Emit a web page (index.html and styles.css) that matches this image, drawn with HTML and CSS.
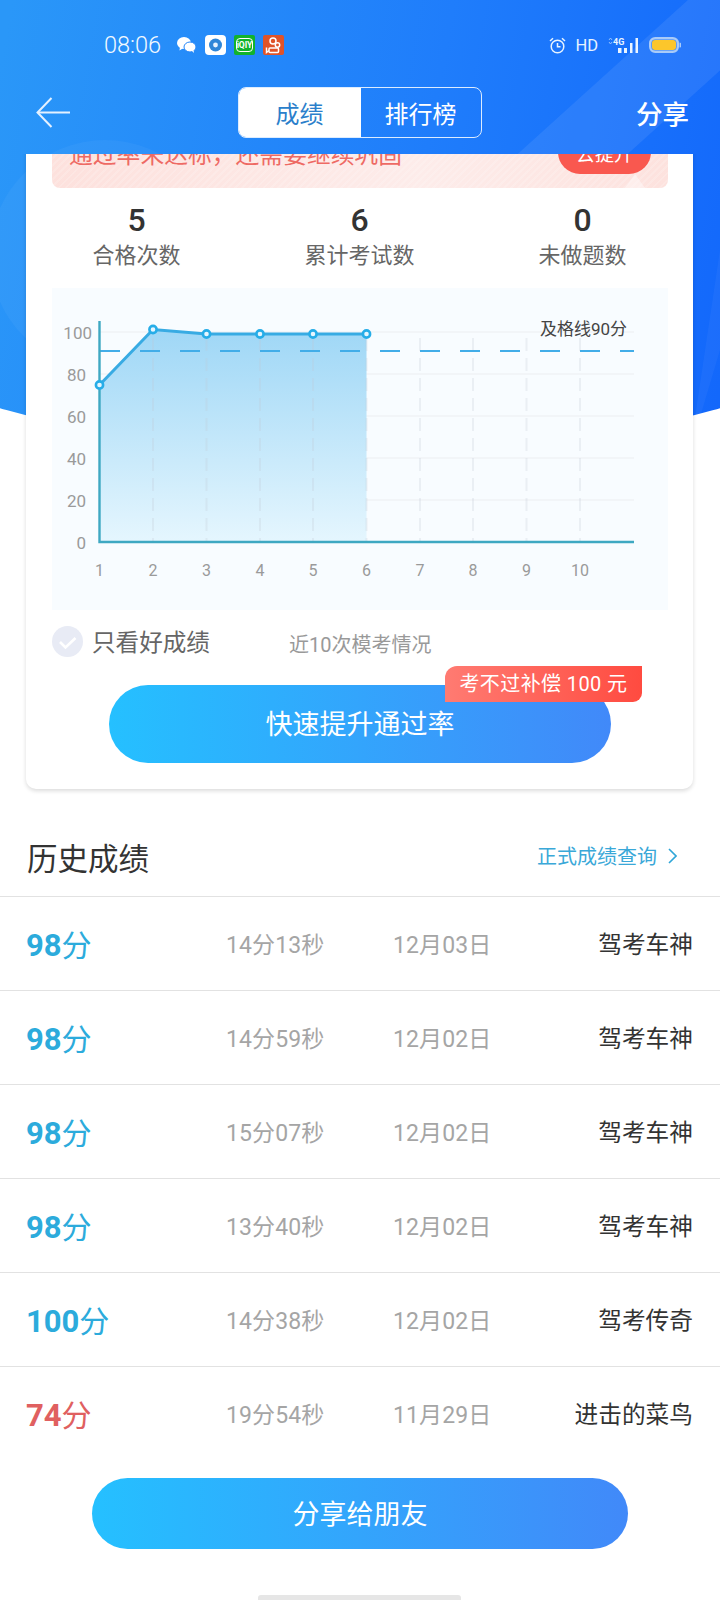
FILE: index.html
```html
<!DOCTYPE html>
<html lang="zh-CN">
    <head>
        <meta charset="UTF-8" />
        <meta name="viewport" content="width=device-width, initial-scale=1.0" />
        <title>成绩</title>
        <link rel="stylesheet" href="styles.css">
    </head>
    <body>
        <div class="app">
            <div class="hero">
                <svg class="hero-art" width="1000" height="451" viewBox="0 0 1000 451">
                    <circle cx="245" cy="255" r="115" fill="#fff" opacity="0.04" />
                    <polygon points="640,170 850,-20 960,-20 750,170" fill="#fff" opacity="0.08" />
                    <polygon points="830,451 860,250 860,350" fill="#fff" opacity="0.04" />
                </svg>
            </div>

            <div class="status">
                <span class="clock">08:06</span>
                <svg class="ico-wechat" width="19" height="16" viewBox="0 0 19 16">
                    <ellipse cx="7" cy="6" rx="7" ry="6" fill="#fff" />
                    <path d="M3 10 L2.5 13.5 L6.5 11 Z" fill="#fff" />
                    <ellipse cx="13" cy="10" rx="6" ry="5" fill="#fff" stroke="#2385f9" stroke-width="1" />
                    <path d="M15 14 L17 16 L16.5 13 Z" fill="#fff" />
                </svg>
                <svg class="ico-tile" width="21" height="20" viewBox="0 0 21 20">
                    <rect width="21" height="20" rx="4" fill="#fff" />
                    <circle cx="10.5" cy="10" r="6.5" fill="#2f86d8" />
                    <circle cx="10.5" cy="10" r="2.4" fill="#e8f3ff" />
                </svg>
                <svg class="ico-tile" width="21" height="20" viewBox="0 0 21 20">
                    <rect width="21" height="20" rx="2" fill="#12b32c" />
                    <rect x="2.5" y="3.5" width="16" height="13" rx="3.5" fill="none" stroke="#fff" stroke-width="1" />
                    <text class="ico-iqiyi" x="10.5" y="13.2">iQIY</text>
                </svg>
                <svg class="ico-tile" width="21" height="20" viewBox="0 0 21 20">
                    <rect width="21" height="20" rx="2" fill="#df5329" />
                    <g fill="none" stroke="#fff" stroke-width="1.5">
                        <circle cx="10" cy="6" r="3" />
                        <circle cx="14.5" cy="10" r="2.2" />
                        <rect x="6" y="13" width="9.5" height="4.5" rx="1" />
                        <path d="M3.5 12.5 V17.5 L6 15.5" />
                    </g>
                </svg>
                <div class="status-right">
                    <svg width="17" height="17" viewBox="0 0 17 17" fill="none" stroke="#e6f3ff" stroke-width="1.5">
                        <circle cx="8.5" cy="9.5" r="6.3" />
                        <path d="M8.5 6 V9.8 H11.5" />
                        <path d="M1 4 L4 1.2 M16 4 L13 1.2" />
                    </svg>
                    <span class="hd">HD</span>
                    <svg width="31" height="16" viewBox="0 0 31 16">
                        <path d="M2 3 L3.5 1 L5 3 M2 5 L3.5 7 L5 5" fill="none" stroke="#a9d0ff" stroke-width="0.8" />
                        <text class="ico-4g" x="6" y="8">4G</text>
                        <rect x="11" y="11" width="3.5" height="5" fill="#eaf4ff" />
                        <rect x="17" y="11" width="3" height="5" fill="#eaf4ff" />
                        <rect x="23" y="6" width="2.5" height="10" fill="#eaf4ff" />
                        <rect x="28.5" y="1" width="2.5" height="15" fill="#eaf4ff" />
                    </svg>
                    <svg width="32" height="16" viewBox="0 0 32 16">
                        <rect x="1.2" y="1.2" width="27.6" height="13.6" rx="5" fill="none" stroke="#a9cbf8" stroke-width="2.4" />
                        <rect x="3" y="3" width="24" height="10" rx="3" fill="#fcc62b" />
                        <path d="M30.5 5.5 a2 2.5 0 0 1 0 5" fill="#a9cbf8" />
                    </svg>
                </div>
            </div>

            <nav class="nav">
                <svg class="back" width="34" height="31" viewBox="0 0 34 31" fill="none" stroke="#e4f1ff" stroke-width="2">
                    <path d="M34 15.5 H2" />
                    <path d="M15.5 1 L1.5 15.5 L15.5 30" />
                </svg>
                <div class="tabs">
                    <span class="tab tab-on">成绩</span>
                    <span class="tab">排行榜</span>
                </div>
                <span class="nav-share">分享</span>
            </nav>

            <main class="scroll">
                <section class="card">
                    <div class="notice">
                        <span class="notice-text">通过率未达标，还需要继续巩固</span>
                        <span class="notice-btn">去提升</span>
                    </div>

                    <div class="stats">
                        <div class="stat"><b>5</b><span>合格次数</span></div>
                        <div class="stat"><b>6</b><span>累计考试数</span></div>
                        <div class="stat"><b>0</b><span>未做题数</span></div>
                    </div>

                    <div class="chart">
                        <svg width="616" height="322" viewBox="52 288 616 322">
                            <defs>
                                <linearGradient id="area" x1="0" y1="0" x2="0" y2="1">
                                    <stop offset="0" stop-color="#9fd7f6" />
                                    <stop offset="1" stop-color="#e5f6fe" />
                                </linearGradient>
                            </defs>

                            <g class="grid-h">
                                <path d="M100 332 H634" />
                                <path d="M100 374 H634" />
                                <path d="M100 416 H634" />
                                <path d="M100 458 H634" />
                                <path d="M100 500 H634" />
                            </g>
                            <polygon points="99.5,385 153,329.5 206.5,334 260,334 313,334 366.5,334 366.5,542 99.5,542" fill="url(#area)" />
                            <g class="grid-v">
                                <path d="M153 338 V542" />
                                <path d="M206.5 338 V542" />
                                <path d="M260 338 V542" />
                                <path d="M313 338 V542" />
                                <path d="M366.5 338 V542" />
                                <path d="M420 338 V542" />
                                <path d="M473 338 V542" />
                                <path d="M526.5 338 V542" />
                                <path d="M580 338 V542" />
                            </g>

                            <path class="pass" d="M100 351 H634" />
                            <path class="axis" d="M99.5 321 V542 H634" />
                            <polyline class="line" points="99.5,385 153,329.5 206.5,334 260,334 313,334 366.5,334" />
                            <g class="dots">
                                <circle cx="99.5" cy="385" r="3.6" />
                                <circle cx="153" cy="329.5" r="3.6" />
                                <circle cx="206.5" cy="334" r="3.6" />
                                <circle cx="260" cy="334" r="3.6" />
                                <circle cx="313" cy="334" r="3.6" />
                                <circle cx="366.5" cy="334" r="3.6" />
                            </g>

                            <g class="y-label">
                                <text x="92" y="339">100</text>
                                <text x="86" y="381">80</text>
                                <text x="86" y="423">60</text>
                                <text x="86" y="465">40</text>
                                <text x="86" y="507">20</text>
                                <text x="86" y="549">0</text>
                            </g>
                            <g class="x-label">
                                <text x="99.5" y="576">1</text>
                                <text x="153" y="576">2</text>
                                <text x="206.5" y="576">3</text>
                                <text x="260" y="576">4</text>
                                <text x="313" y="576">5</text>
                                <text x="366.5" y="576">6</text>
                                <text x="420" y="576">7</text>
                                <text x="473" y="576">8</text>
                                <text x="526.5" y="576">9</text>
                                <text x="580" y="576">10</text>
                            </g>
                            <text class="pass-label" x="627" y="335">及格线90分</text>
                        </svg>
                    </div>

                    <div class="filter">
                        <svg width="31" height="31" viewBox="0 0 31 31">
                            <circle cx="15.5" cy="15.5" r="15.5" fill="#e8ebf5" />
                            <path d="M8 16 L13.5 21.5 L23.5 12" fill="none" stroke="#fff" stroke-width="2.6" />
                        </svg>
                        <span class="filter-label">只看好成绩</span>
                        <span class="filter-note">近10次模考情况</span>
                    </div>

                    <div class="cta">
                        快速提升通过率
                        <span class="cta-badge">考不过补偿 100 元</span>
                    </div>
                </section>

                <div class="hist-head">
                    <h2>历史成绩</h2>
                    <a class="hist-link">正式成绩查询
                        <svg width="9" height="16" viewBox="0 0 9 16" fill="none" stroke="#2fa6d8" stroke-width="1.6">
                            <path d="M1 1 L8 8 L1 15" />
                        </svg>
                    </a>
                </div>

                <ul class="rows">
                    <li class="row">
                        <span class="score"><b>98</b>分</span>
                        <span class="cell">14分13秒</span>
                        <span class="cell">12月03日</span>
                        <span class="title">驾考车神</span>
                    </li>
                    <li class="row">
                        <span class="score"><b>98</b>分</span>
                        <span class="cell">14分59秒</span>
                        <span class="cell">12月02日</span>
                        <span class="title">驾考车神</span>
                    </li>
                    <li class="row">
                        <span class="score"><b>98</b>分</span>
                        <span class="cell">15分07秒</span>
                        <span class="cell">12月02日</span>
                        <span class="title">驾考车神</span>
                    </li>
                    <li class="row">
                        <span class="score"><b>98</b>分</span>
                        <span class="cell">13分40秒</span>
                        <span class="cell">12月02日</span>
                        <span class="title">驾考车神</span>
                    </li>
                    <li class="row">
                        <span class="score"><b>100</b>分</span>
                        <span class="cell">14分38秒</span>
                        <span class="cell">12月02日</span>
                        <span class="title">驾考传奇</span>
                    </li>
                    <li class="row">
                        <span class="score score-low"><b>74</b>分</span>
                        <span class="cell">19分54秒</span>
                        <span class="cell">11月29日</span>
                        <span class="title">进击的菜鸟</span>
                    </li>
                </ul>

                <div class="share-btn">分享给朋友</div>
                <div class="home-bar"></div>
            </main>
        </div>
    </body>
</html>
```

FILE: styles.css
```css
* {
    margin: 0;
    padding: 0;
    box-sizing: border-box;
}

body {
    background: #fff;
    font-family: Roboto, "Noto Sans CJK SC", sans-serif;
    color: #333;
}

.app {
    position: relative;
    display: flex;
    flex-direction: column;
    width: 720px;
    height: 1600px;
    overflow: hidden;
}

/* blue backdrop, wider than the page so only the shallow part of the curve shows */
.hero {
    position: absolute;
    top: 0;
    left: -140px;
    width: 1000px;
    height: 451px;
    border-radius: 0 0 500px 500px / 0 0 140px 140px;
    background: linear-gradient(100deg, #2a97f8 14%, #1f7dfb 55%, #1368fb 86%);
    overflow: hidden;
}

.hero-art {
    display: block;
}

.status,
.nav,
.scroll {
    position: relative;
}

.status {
    display: flex;
    align-items: center;
    flex: none;
    height: 87px;
    padding: 3px 39px 0 104px;
    color: #e6f3ff;
}

.clock {
    margin-right: 16px;
    font-size: 23.5px;
    font-weight: 300;
    color: #f2f9ff;
}

.ico-wechat {
    margin-right: 9px;
}

.ico-tile {
    margin-right: 8px;
}

.ico-iqiyi {
    font-size: 8.5px;
    font-weight: 700;
    fill: #fff;
    text-anchor: middle;
}

.ico-4g {
    font-size: 9px;
    font-weight: 700;
    fill: #eaf4ff;
}

.status-right {
    display: flex;
    align-items: center;
    gap: 9px;
    margin-left: auto;
}

.status-right svg:last-child {
    margin-left: 2px;
}

.hd {
    font-size: 16.5px;
    font-weight: 400;
}

.nav {
    display: grid;
    flex: none;
    grid-template-columns: 1fr auto 1fr;
    align-items: center;
    height: 51px;
    margin-bottom: 16px;
    padding: 0 31px;
}

.back {
    margin-left: 5px;
}

.tabs {
    display: flex;
    width: 244px;
    height: 51px;
    margin-left: -1px;
    border: 1px solid #dcecff;
    border-radius: 8px;
    overflow: hidden;
}

.tab {
    display: flex;
    flex: 1;
    align-items: center;
    justify-content: center;
    font-size: 24px;
    color: #fff;
}

.tab-on {
    flex: none;
    width: 122px;
    background: #fff;
    color: #2b7fcb;
}

.nav-share {
    justify-self: end;
    font-size: 26.5px;
    font-weight: 500;
    color: #fff;
}

.scroll {
    flex: 1;
    overflow: hidden;
}

.card {
    width: 667px;
    margin: -27px 0 0 26px;
    padding: 0 25px 26px 26px;
    border-radius: 0 0 10px 10px;
    background: #fff;
    box-shadow: 0 2px 4px rgba(0, 0, 0, 0.14);
}

.notice {
    position: relative;
    display: flex;
    align-items: center;
    justify-content: space-between;
    height: 61px;
    padding: 0 17px 11px 17px;
    border-radius: 8px;
    background:
        repeating-linear-gradient(-45deg, rgba(255, 255, 255, 0.16) 0 2px, transparent 2px 5px),
        linear-gradient(90deg, #fde1dd, #fdecea 60%, #fde2de);

    &::after {
        content: "";
        position: absolute;
        right: 23px;
        bottom: 0;
        border: 10px solid transparent;
        border-top: 0;
        border-bottom: 14px solid rgba(255, 255, 255, 0.4);
    }
}

.notice-text {
    font-size: 23.8px;
    color: #ee6a64;
}

.notice-btn {
    display: flex;
    align-items: center;
    justify-content: center;
    width: 93px;
    height: 44px;
    border-radius: 22px;
    background: #f9584f;
    font-size: 19px;
    color: #fff;
}

.stats {
    display: grid;
    grid-template-columns: repeat(3, 223px);
    margin: 12px 0 16px -27px;
}

.stat {
    display: flex;
    flex-direction: column;
    align-items: center;

    b {
        font-size: 32px;
        font-weight: 500;
        line-height: 40px;
        color: #333;
    }

    span {
        font-size: 22px;
        line-height: 32px;
        color: #666;
    }
}

.chart {
    height: 322px;
    background: #f8fcff;

    svg {
        display: block;
    }
}

.grid-h path {
    fill: none;
    stroke: #f0f3f6;
    stroke-width: 1.5;
}

.grid-v path {
    fill: none;
    stroke: rgba(190, 200, 212, 0.25);
    stroke-width: 2;
    stroke-dasharray: 13 7;
}

.pass {
    fill: none;
    stroke: #42ade8;
    stroke-width: 2;
    stroke-dasharray: 20 20;
}

.axis {
    fill: none;
    stroke: #3ea8c2;
    stroke-width: 2.4;
}

.line {
    fill: none;
    stroke: #38abe3;
    stroke-width: 3;
}

.dots circle {
    fill: #e6f6ff;
    stroke: #26ade8;
    stroke-width: 2.6;
}

.y-label text {
    font-size: 17px;
    fill: #9a9a9a;
    text-anchor: end;
}

.x-label text {
    font-size: 16px;
    fill: #9a9a9a;
    text-anchor: middle;
}

.pass-label {
    font-size: 17px;
    fill: #444;
    text-anchor: end;
}

.filter {
    display: flex;
    align-items: center;
    height: 31px;
    margin-top: 16px;
}

.filter-label {
    margin-left: 9px;
    padding-bottom: 2px;
    font-size: 23.6px;
    color: #666;
}

.filter-note {
    margin-left: 79px;
    padding-top: 4px;
    font-size: 20px;
    color: #999;
}

.cta {
    position: relative;
    width: 502px;
    height: 78px;
    margin: 28px auto 0;
    border-radius: 39px;
    background: linear-gradient(90deg, #25c0ff, #4189f9);
    font-size: 27px;
    line-height: 81px;
    text-align: center;
    color: #fff;
}

.cta-badge {
    position: absolute;
    top: -19px;
    right: -31px;
    width: 197px;
    height: 36px;
    border-radius: 12px 0 9px 0;
    background: linear-gradient(90deg, #ff7b72, #ff4b40);
    font-size: 20px;
    letter-spacing: 0.4px;
    line-height: 36px;
}

.hist-head {
    display: flex;
    align-items: center;
    justify-content: space-between;
    height: 107px;
    padding: 28px 43px 0 27px;

    h2 {
        font-size: 30.5px;
        font-weight: 400;
        color: #333;
    }
}

.hist-link {
    display: flex;
    align-items: center;
    gap: 11px;
    padding-bottom: 2px;
    font-size: 20px;
    color: #3aa8d8;
}

.rows {
    list-style: none;
}

.row {
    display: grid;
    grid-template-columns: 200px 167px 1fr auto;
    align-items: center;
    height: 94px;
    padding: 0 27px 2px 26px;
    border-top: 1px solid #e2e2e2;
}

.score {
    font-size: 30px;
    color: #2cabdc;

    b {
        font-size: 31px;
        font-weight: 700;
    }
}

.score-low {
    color: #e06060;
}

.cell {
    font-size: 23px;
    letter-spacing: 0.1px;
    color: #a5a5a5;
}

.title {
    font-size: 23.7px;
    color: #333;
}

.share-btn {
    width: 536px;
    height: 71px;
    margin: 18px 0 0 92px;
    border-radius: 36px;
    background: linear-gradient(90deg, #25c0ff, #4189f9);
    font-size: 27px;
    line-height: 75px;
    text-align: center;
    color: #fff;
}

.home-bar {
    width: 203px;
    height: 5px;
    margin: 46px 0 0 258px;
    border-radius: 3px 3px 0 0;
    background: #e6e6e6;
}
```
